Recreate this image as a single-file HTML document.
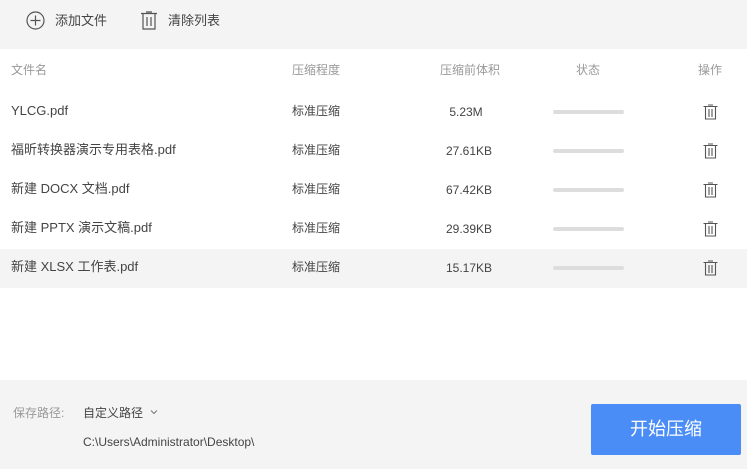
<!DOCTYPE html>
<html><head><meta charset="utf-8"><style>
*{margin:0;padding:0;box-sizing:border-box}
body{width:747px;height:469px;overflow:hidden;background:#fff;font-family:"Liberation Sans","Noto Sans CJK SC",sans-serif;color:#444;position:relative}
.top{position:absolute;left:0;top:0;width:747px;height:49px;background:#f4f4f4}
.t{position:absolute;font-size:13px;white-space:nowrap;line-height:16px}
.row{position:absolute;left:0;width:747px;height:39px}
.bar{position:absolute;left:553px;width:71px;height:4px;background:#ddd;border-radius:2px}
.bottom{position:absolute;left:0;top:380px;width:747px;height:89px;background:#f4f4f4}
.btn{position:absolute;left:591px;top:404px;width:150px;height:51px;background:#4b8df6;border-radius:2px;color:#fff;font-size:18px;text-align:center;line-height:51px}
</style></head><body>
<div class="top"></div>
<svg style="position:absolute;left:26px;top:11px" width="19" height="19" viewBox="0 0 19 19"><circle cx="9.5" cy="9.5" r="8.5" fill="none" stroke="#555" stroke-width="1.2"/><path d="M9.5 4.5v10M4.5 9.5h10" stroke="#555" stroke-width="1.2"/></svg>
<div class="t" style="left:55px;top:13px;color:#444">添加文件</div>
<svg style="position:absolute;left:140px;top:11px" width="18" height="19" viewBox="0 0 18 19"><path d="M1 2.5h16M6 1h6M3 2.5V18h12V2.5M7 6v9M11 6v9" fill="none" stroke="#555" stroke-width="1.2"/></svg>
<div class="t" style="left:168px;top:13px;color:#444">清除列表</div>

<div class="t" style="left:11px;top:62px;color:#999;font-size:12px">文件名</div>
<div class="t" style="left:292px;top:62px;color:#999;font-size:12px">压缩程度</div>
<div class="t" style="left:440px;top:62px;color:#999;font-size:12px">压缩前体积</div>
<div class="t" style="left:576px;top:62px;color:#999;font-size:12px">状态</div>
<div class="t" style="left:698px;top:62px;color:#999;font-size:12px">操作</div>

<div class="row" style="top:249px;background:#f4f4f4"></div>

<div class="t" style="left:11px;top:103px">YLCG.pdf</div>
<div class="t" style="left:11px;top:142px">福昕转换器演示专用表格.pdf</div>
<div class="t" style="left:11px;top:181px">新建 DOCX 文档.pdf</div>
<div class="t" style="left:11px;top:220px">新建 PPTX 演示文稿.pdf</div>
<div class="t" style="left:11px;top:259px">新建 XLSX 工作表.pdf</div>

<div class="t" style="left:292px;top:103px;font-size:12px">标准压缩</div>
<div class="t" style="left:292px;top:142px;font-size:12px">标准压缩</div>
<div class="t" style="left:292px;top:181px;font-size:12px">标准压缩</div>
<div class="t" style="left:292px;top:220px;font-size:12px">标准压缩</div>
<div class="t" style="left:292px;top:259px;font-size:12px">标准压缩</div>

<div class="t" style="left:416px;width:100px;text-align:center;top:104px;font-size:12px">5.23M</div>
<div class="t" style="left:419px;width:100px;text-align:center;top:143px;font-size:12px">27.61KB</div>
<div class="t" style="left:419px;width:100px;text-align:center;top:182px;font-size:12px">67.42KB</div>
<div class="t" style="left:419px;width:100px;text-align:center;top:221px;font-size:12px">29.39KB</div>
<div class="t" style="left:419px;width:100px;text-align:center;top:260px;font-size:12px">15.17KB</div>

<div class="bar" style="top:110px"></div>
<div class="bar" style="top:149px"></div>
<div class="bar" style="top:188px"></div>
<div class="bar" style="top:227px"></div>
<div class="bar" style="top:266px"></div>

<svg style="position:absolute;left:703px;top:104px" width="15" height="16" viewBox="0 0 15 16"><path d="M0.5 2.5h14M5 1h5M2.5 2.5V15h10V2.5M6 5v8M9 5v8" fill="none" stroke="#555" stroke-width="1.1"/></svg>
<svg style="position:absolute;left:703px;top:143px" width="15" height="16" viewBox="0 0 15 16"><path d="M0.5 2.5h14M5 1h5M2.5 2.5V15h10V2.5M6 5v8M9 5v8" fill="none" stroke="#555" stroke-width="1.1"/></svg>
<svg style="position:absolute;left:703px;top:182px" width="15" height="16" viewBox="0 0 15 16"><path d="M0.5 2.5h14M5 1h5M2.5 2.5V15h10V2.5M6 5v8M9 5v8" fill="none" stroke="#555" stroke-width="1.1"/></svg>
<svg style="position:absolute;left:703px;top:221px" width="15" height="16" viewBox="0 0 15 16"><path d="M0.5 2.5h14M5 1h5M2.5 2.5V15h10V2.5M6 5v8M9 5v8" fill="none" stroke="#555" stroke-width="1.1"/></svg>
<svg style="position:absolute;left:703px;top:260px" width="15" height="16" viewBox="0 0 15 16"><path d="M0.5 2.5h14M5 1h5M2.5 2.5V15h10V2.5M6 5v8M9 5v8" fill="none" stroke="#555" stroke-width="1.1"/></svg>

<div class="bottom"></div>
<div class="t" style="left:13px;top:405px;color:#999;font-size:12px">保存路径:</div>
<div class="t" style="left:83px;top:405px;font-size:12px;color:#444">自定义路径</div>
<svg style="position:absolute;left:150px;top:409px" width="8" height="6" viewBox="0 0 8 6"><path d="M1 1.5l3 3 3-3" fill="none" stroke="#777" stroke-width="1"/></svg>
<div class="t" style="left:83px;top:434px;font-size:12px;color:#444">C:\Users\Administrator\Desktop\</div>
<div class="btn">开始压缩</div>
</body></html>
